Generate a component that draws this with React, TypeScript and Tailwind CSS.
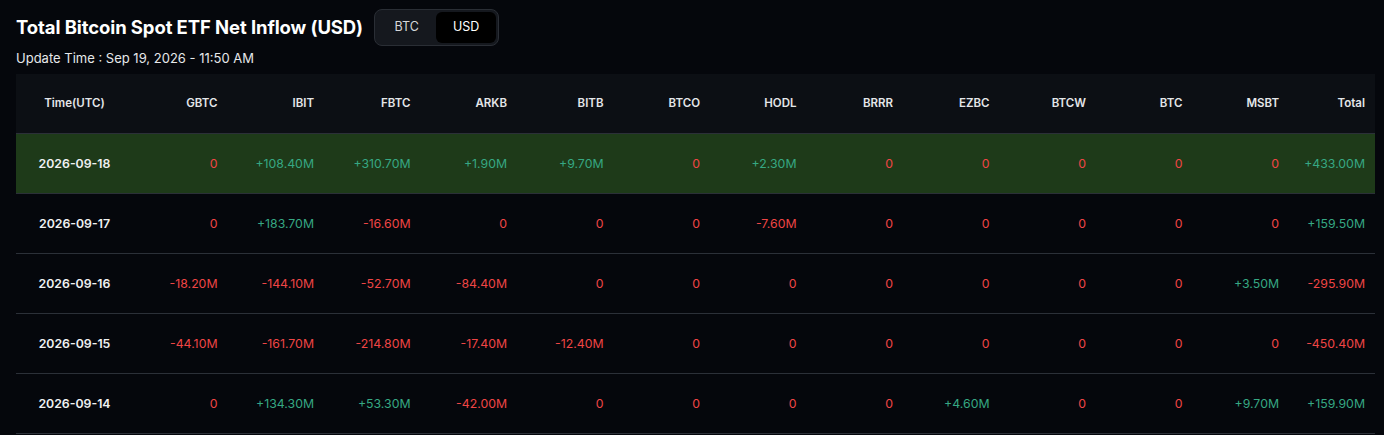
import { useState } from "react";

type Row = { date: string; values: string[]; total: string; highlight?: boolean };

const columns = ["GBTC", "IBIT", "FBTC", "ARKB", "BITB", "BTCO", "HODL", "BRRR", "EZBC", "BTCW", "BTC", "MSBT"];

const rows: Row[] = [
  {
    date: "2026-09-18",
    values: ["0", "+108.40M", "+310.70M", "+1.90M", "+9.70M", "0", "+2.30M", "0", "0", "0", "0", "0"],
    total: "+433.00M",
    highlight: true,
  },
  {
    date: "2026-09-17",
    values: ["0", "+183.70M", "-16.60M", "0", "0", "0", "-7.60M", "0", "0", "0", "0", "0"],
    total: "+159.50M",
  },
  {
    date: "2026-09-16",
    values: ["-18.20M", "-144.10M", "-52.70M", "-84.40M", "0", "0", "0", "0", "0", "0", "0", "+3.50M"],
    total: "-295.90M",
  },
  {
    date: "2026-09-15",
    values: ["-44.10M", "-161.70M", "-214.80M", "-17.40M", "-12.40M", "0", "0", "0", "0", "0", "0", "0"],
    total: "-450.40M",
  },
  {
    date: "2026-09-14",
    values: ["0", "+134.30M", "+53.30M", "-42.00M", "0", "0", "0", "0", "+4.60M", "0", "0", "+9.70M"],
    total: "+159.90M",
  },
];

// green for inflow, red for zero / outflow
function valueColor(v: string) {
  return v.startsWith("+") ? "text-[#36a883]" : "text-[#ef4545]";
}

const gridCols = "grid grid-cols-[117px_repeat(12,96.5px)_86px]";

export default function App() {
  const [unit, setUnit] = useState<"BTC" | "USD">("USD");

  return (
    <div className="min-h-[435px] bg-[#05070c] font-['Inter',sans-serif] text-[#e6e8ea]">
      <div className="px-4 pt-[9px]">
        <div className="flex items-center gap-[11px]">
          <h1 className="text-[18.5px] font-bold tracking-[-0.1px] text-white">Total Bitcoin Spot ETF Net Inflow (USD)</h1>
          <div className="flex h-[37px] w-[125px] items-center rounded-lg border border-[#2a2e35] bg-[#15181e] p-[2px]">
            {(["BTC", "USD"] as const).map((u) => (
              <button
                key={u}
                onClick={() => setUnit(u)}
                className={
                  "h-[31px] flex-1 rounded-md text-[12.5px] " +
                  (unit === u ? "bg-black text-white" : "text-[#d5d7da]")
                }
              >
                {u}
              </button>
            ))}
          </div>
        </div>
        <div className="mt-[3px] text-[13px] leading-[19px] text-[#e6e8ea]">Update Time : Sep 19, 2026 - 11:50 AM</div>

        <div className="mt-[6px] w-[1359px]">
          <div className={`${gridCols} h-[59px] items-center bg-[#0c0f14] text-[11.5px] font-semibold text-[#e4e6e9]`}>
            <div className="text-center">Time(UTC)</div>
            {columns.map((c) => (
              <div key={c} className="pr-3 text-right">
                {c}
              </div>
            ))}
            <div className="pr-3 text-right">Total</div>
          </div>
          {rows.map((r) => (
            <div
              key={r.date}
              className={`${gridCols} h-[60px] items-center border-t border-[#2b3038] text-[12.3px] ${
                r.highlight ? "bg-[#1e3a19]" : ""
              }`}
            >
              <div className="pt-[2px] text-center font-semibold text-[#f0f1f2]">{r.date}</div>
              {r.values.map((v, i) => (
                <div key={i} className={`pt-[2px] pr-3 text-right ${valueColor(v)}`}>
                  {v}
                </div>
              ))}
              <div className={`pt-[2px] pr-3 text-right ${valueColor(r.total)}`}>{r.total}</div>
            </div>
          ))}
          <div className="border-t border-[#2b3038]" />
        </div>
      </div>
    </div>
  );
}
